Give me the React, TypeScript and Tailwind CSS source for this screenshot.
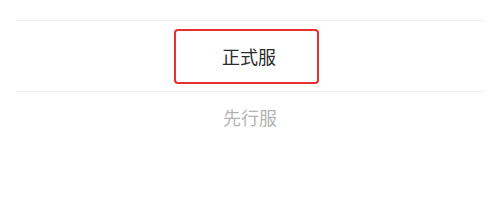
import React from "react";

const App: React.FC = () => {
  return (
    <div
      className="w-[500px] h-[201px] bg-white overflow-hidden"
      style={{ fontFamily: '"Noto Sans CJK SC", "Noto Sans", sans-serif' }}
    >
      <div className="h-[20px]"></div>
      <div className="mx-4 h-px bg-[#f0f0f0]"></div>
      <div className="h-[70px] flex items-center justify-center pr-[7px]">
        <div className="w-[145px] h-[55px] pl-[5px] border-[2.5px] border-[#e63131] rounded-[4px] flex items-center justify-center">
          <span className="text-[18px] text-[#2b2b2b]">正式服</span>
        </div>
      </div>
      <div className="mx-4 h-px bg-[#f0f0f0]"></div>
      <div className="h-[50px] flex items-center justify-center">
        <span className="text-[18px] text-[#b3b3b3]">先行服</span>
      </div>
    </div>
  );
};

export default App;
